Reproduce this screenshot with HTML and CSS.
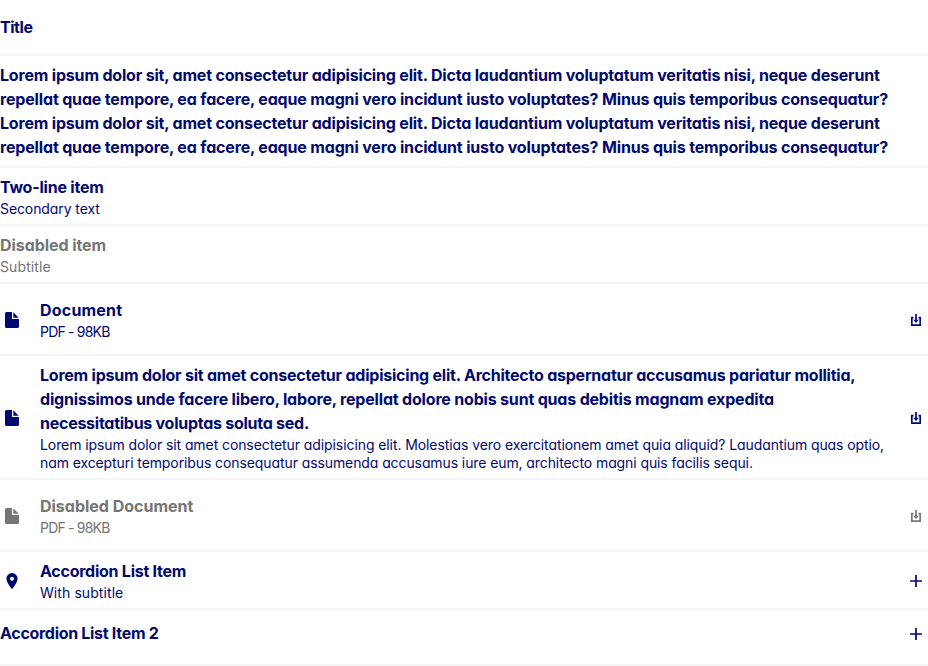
FILE: index.html
```html
<!DOCTYPE html>
<html lang="en">
<head>
<meta charset="utf-8">
<title>List</title>
<link rel="stylesheet" href="styles.css">
</head>
<body>
<svg class="defs" aria-hidden="true">
  <symbol id="file" viewBox="0 0 24 24"><path d="M6.500 4H12v7h7v7.500a1.500 1.500 0 0 1-1.500 1.500h-11A1.500 1.500 0 0 1 5 18.500v-13A1.500 1.500 0 0 1 6.500 4ZM13.300 4.300 18.700 9.700h-5.400Z"/></symbol>
  <symbol id="pin" viewBox="0 0 24 24"><path fill-rule="evenodd" d="M12 4a5.600 5.600 0 0 1 5.600 5.600c0 3.900-4 8.600-5.200 10.200a.5.5 0 0 1-.8 0C10.400 18.200 6.400 13.500 6.400 9.600A5.600 5.600 0 0 1 12 4Zm0 3.700a2 2 0 1 0 0 4 2 2 0 0 0 0-4Z"/></symbol>
  <symbol id="download" viewBox="0 0 24 24"><path d="M9.500 9.700H7.800v7.500h8.400V9.700h-1.700M12 6v7" fill="none" stroke="currentColor" stroke-width="1.700" stroke-linejoin="round"/><path d="M9.200 11.700h5.600L12 15Z"/></symbol>
  <symbol id="plus" viewBox="0 0 24 24"><path d="M12 6v12M6 12h12" fill="none" stroke="currentColor" stroke-width="1.700"/></symbol>
</svg>
<ul class="list">
  <li class="row"><div class="content"><div class="title t-title">Title</div></div></li>
  <li class="row"><div class="content"><div class="title t-long">
    <span class="line a">Lorem ipsum dolor sit, amet consectetur adipisicing elit. Dicta laudantium voluptatum veritatis nisi, neque deserunt</span>
    <span class="line b">repellat quae tempore, ea facere, eaque magni vero incidunt iusto voluptates? Minus quis temporibus consequatur?</span>
    <span class="line a">Lorem ipsum dolor sit, amet consectetur adipisicing elit. Dicta laudantium voluptatum veritatis nisi, neque deserunt</span>
    <span class="line b">repellat quae tempore, ea facere, eaque magni vero incidunt iusto voluptates? Minus quis temporibus consequatur?</span>
  </div></div></li>
  <li class="row"><div class="content"><div class="title t-two">Two-line item</div><div class="sub s-two">Secondary text</div></div></li>
  <li class="row disabled"><div class="content"><div class="title t-dis">Disabled item</div><div class="sub s-dis">Subtitle</div></div></li>
  <li class="row tall"><svg class="icon"><use href="#file"/></svg><div class="content"><div class="title t-doc">Document</div><div class="sub s-pdf">PDF - 98KB</div></div><svg class="icon"><use href="#download"/></svg></li>
  <li class="row tall"><svg class="icon"><use href="#file"/></svg><div class="content"><div class="title">
    <span class="line c">Lorem ipsum dolor sit amet consectetur adipisicing elit. Architecto aspernatur accusamus pariatur mollitia,</span>
    <span class="line d">dignissimos unde facere libero, labore, repellat dolore nobis sunt quas debitis magnam expedita</span>
    <span class="line e">necessitatibus voluptas soluta sed.</span></div>
    <div class="sub">
    <span class="line f">Lorem ipsum dolor sit amet consectetur adipisicing elit. Molestias vero exercitationem amet quia aliquid? Laudantium quas optio,</span>
    <span class="line g">nam excepturi temporibus consequatur assumenda accusamus iure eum, architecto magni quis facilis sequi.</span>
  </div></div><svg class="icon"><use href="#download"/></svg></li>
  <li class="row tall disabled"><svg class="icon"><use href="#file"/></svg><div class="content"><div class="title t-ddoc">Disabled Document</div><div class="sub s-pdf">PDF - 98KB</div></div><svg class="icon"><use href="#download"/></svg></li>
  <li class="row"><svg class="icon"><use href="#pin"/></svg><div class="content"><div class="title t-acc">Accordion List Item</div><div class="sub s-acc">With subtitle</div></div><svg class="icon"><use href="#plus"/></svg></li>
  <li class="row last"><div class="content"><div class="title t-acc2">Accordion List Item 2</div></div><svg class="icon"><use href="#plus"/></svg></li>
</ul>
</body>
</html>
```
FILE: styles.css
```css
* { box-sizing: border-box; }
body { margin: 0; background: #fff; font-family: Inter, "Liberation Sans", sans-serif; font-feature-settings: "cv11"; color: #000a6e; }
.defs { display: none; }
.list { list-style: none; margin: 0; padding: 0; }
.row { display: flex; align-items: center; gap: 16px; min-height: 56px; padding: 8px 0; box-shadow: inset 0 -2px #f5f5f5; }
.row.tall { min-height: 72px; }
.row.last { padding: 4px 0 12px; }
.disabled { color: #757575; }
.content { flex: 1; min-width: 0; }
.icon { width: 24px; height: 24px; flex: none; fill: currentColor; }
.title { margin-top: -1px; padding-bottom: 1px; font-size: 16px; line-height: 24px; font-weight: 700; letter-spacing: -0.45px; white-space: nowrap; }
.sub { font-size: 14px; line-height: 18px; font-weight: 400; letter-spacing: -0.3px; white-space: nowrap; }
.line { display: block; }
.a { letter-spacing: -0.185px; }
.b { letter-spacing: -0.165px; }
.c { letter-spacing: -0.226px; }
.d { letter-spacing: -0.187px; }
.e { letter-spacing: -0.26px; }
.f { letter-spacing: -0.087px; }
.g { letter-spacing: -0.096px; }
.t-two { letter-spacing: -0.22px; }
.t-dis { letter-spacing: -0.07px; }
.t-doc { letter-spacing: 0.2px; }
.t-ddoc { letter-spacing: -0.01px; }
.t-acc { letter-spacing: -0.25px; }
.t-acc2 { letter-spacing: -0.3px; }
.s-two { letter-spacing: -0.09px; }
.s-dis { letter-spacing: 0.1px; }
.s-pdf { letter-spacing: -0.8px; }
.s-acc { letter-spacing: 0.08px; }
```
